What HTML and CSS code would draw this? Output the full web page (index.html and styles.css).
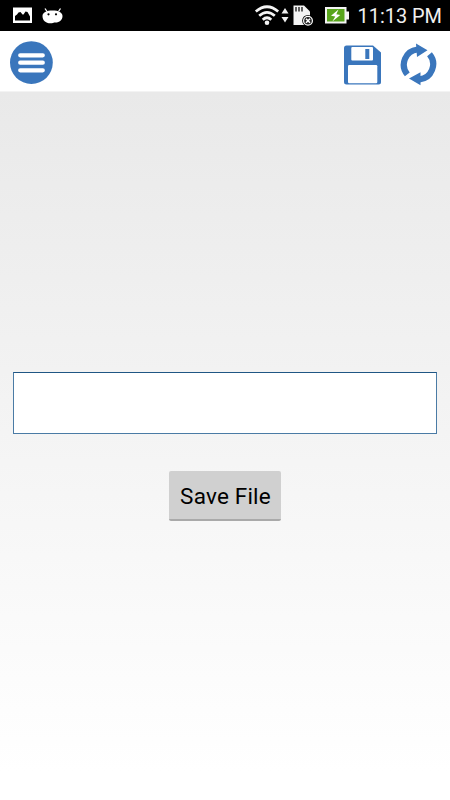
FILE: index.html
```html
<!DOCTYPE html>
<html lang="en">
<head>
<meta charset="utf-8">
<title>Save File</title>
<link rel="stylesheet" href="styles.css">
</head>
<body>
<div class="screen">
  <div class="status">
    <svg class="notices" viewBox="0 0 80 31" width="80" height="31">
      <path fill="#fff" d="M13 7.500h19v15.500h-19z"/>
      <path fill="#000" d="M15 20.500v-4.500l2-1.500 1.500-2 2-.5 2 2.500h1l2-3 2 .5 2.500 4.500v4z"/>
      <path stroke="#fff" stroke-width="1.300" d="M45 8.500l2 3M60.500 8.500l-2 3"/>
      <path fill="#fff" d="M42.500 16c0-3.500 4-5.500 10-5.500s10 2 10 5.500c0 4-3 6.500-7 6.500-2 0-3 .8-5 .8-5 0-8-3-8-7.300z"/>
      <circle cx="48.500" cy="14.300" r="1.100"/><circle cx="56" cy="14.300" r="1.100"/>
    </svg>
    <svg class="signals" viewBox="250 0 105 31" width="105" height="31">
      <g fill="none" stroke="#f4f4f4" stroke-width="2.700">
        <path d="M255.800 11.500q11.200-9.500 22.400 0M259.200 15.800q7.800-7 15.600 0M262.700 19.700q4.300-3.900 8.600 0"/>
      </g>
      <circle cx="267" cy="22.700" r="2.300" fill="#f4f4f4"/>
      <path fill="#eee" d="M281.500 13.500l3.500-5.500 3.500 5.500zM281.500 17h7l-3.500 5.500z"/>
      <path fill="#f4f4f4" d="M293.500 5.500h10.500l6 6v13.500h-16.500z"/>
      <path stroke="#111" stroke-width="1.300" d="M296 7v4.500M299 7v4.500M302 7v4.500"/>
      <circle cx="308" cy="20.700" r="5.800" fill="#000"/>
      <circle cx="308" cy="20.700" r="4.400" fill="#222" stroke="#fff" stroke-width="1.200"/>
      <path stroke="#fff" stroke-width="1.600" d="M306 18.700l4 4M310 18.700l-4 4"/>
      <path fill="#f4f4f4" d="M325 7h21.500v4.500h2.500v8h-2.500v4h-21.500z"/>
      <path fill="#58a51c" d="M327 9h17.500v12.500h-17.500z"/>
      <path fill="#fff" d="M338.500 9.500l-7.500 6.300 4.300.6-3 5 8-6.500-4-.7z"/>
    </svg>
    <svg class="clock" viewBox="355 0 95 31" width="95" height="31">
      <text x="357.500" y="23" textLength="84.500" lengthAdjust="spacingAndGlyphs">11:13 PM</text>
    </svg>
  </div>
  <header class="toolbar">
    <svg viewBox="10 41 43 43" width="43" height="43">
      <circle cx="31.400" cy="62.600" r="21.400" fill="#3a76bc"/>
      <path d="M20.200 55.300h22.600M20.200 62.700h22.600M20.200 70.300h22.600" stroke="#fff" stroke-width="4.200" stroke-linecap="round"/>
    </svg>
    <div class="actions">
      <svg viewBox="344 45 37 40" width="37" height="40">
        <path fill="#3a76bc" d="M346.500 45.500h26.500l8 7v29.500q0 2.500-2.500 2.500h-32q-2.500 0-2.500-2.500v-34q0-2.500 2.500-2.500z"/>
        <rect x="351.300" y="47" width="21.700" height="13.500" rx="1" fill="#fff"/>
        <rect x="365.300" y="49" width="4" height="10" fill="#3a76bc"/>
        <rect x="348" y="65" width="29.300" height="18.300" rx="1.200" fill="#fff"/>
      </svg>
      <svg viewBox="398 43 42 43" width="42" height="43">
        <path fill="none" stroke="#3a76bc" stroke-width="6.200" d="M407.300 74.400A15.300 15.300 0 0 1 417.500 49.500M429.500 54.300A15.300 15.300 0 0 1 419.500 79.400"/>
        <path fill="#3a76bc" d="M416 43.500L427.500 50.300 417 57zM420.500 72.300L409 78.500 420.500 85.300z"/>
      </svg>
    </div>
  </header>
  <main class="content">
    <input class="filename" type="text" aria-label="File name">
    <button class="save" type="button">Save File</button>
  </main>
</div>
</body>
</html>
```
FILE: styles.css
```css
* { box-sizing: border-box; }
body { margin: 0; font-family: Roboto, sans-serif; }
svg { display: block; flex: none; }
.screen { width: 450px; height: 800px; display: flex; flex-direction: column; overflow: hidden; }
.status { height: 31px; background: #000; display: flex; justify-content: flex-start; }
.signals { margin-left: 170px; }
.clock { font-size: 20.500px; fill: #f0f0f0; }
.toolbar { height: 61px; padding: 10px 10px 0; background: #fff; border-bottom: 1px solid #f3f3f3; display: flex; justify-content: space-between; align-items: flex-start; }
.actions { display: flex; gap: 17px; padding-top: 3px; align-items: flex-start; }
.actions svg:first-child { margin-top: 1px; }
.actions svg:last-child { margin-top: -1px; }
.content { flex: 1; display: flex; flex-direction: column; align-items: center; padding-top: 280px; background: linear-gradient(#e9e9e9, #fff 96%); }
.filename { width: 424px; height: 62px; border: 1px solid #4a7ba5; border-top-color: #1f5684; background: #fff; border-radius: 0; outline: 0; padding: 0 10px; font: 22px Roboto, sans-serif; flex: none; }
.save { width: 112px; height: 50px; margin-top: 37px; padding: 2px 0 0 1px; border: 0; border-bottom: 2px solid #a9a9a9; border-radius: 2px; background: #d0d0d0; color: #000; font: 22.500px Roboto, sans-serif; letter-spacing: .2px; white-space: nowrap; }
```
